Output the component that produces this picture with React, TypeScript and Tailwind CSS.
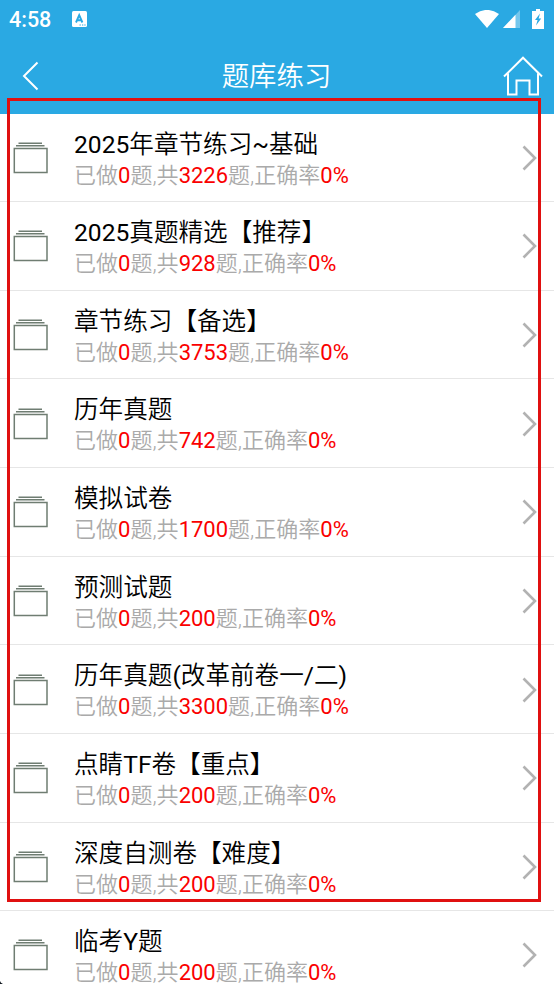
const rows = [
  { title: "2025年章节练习~基础", total: 3226 },
  { title: "2025真题精选【推荐】", total: 928 },
  { title: "章节练习【备选】", total: 3753 },
  { title: "历年真题", total: 742 },
  { title: "模拟试卷", total: 1700 },
  { title: "预测试题", total: 200 },
  { title: "历年真题(改革前卷一/二)", total: 3300 },
  { title: "点睛TF卷【重点】", total: 200 },
  { title: "深度自测卷【难度】", total: 200 },
  { title: "临考Y题", total: 200 },
];

const StatusBar = () => (
  <div className="flex h-[38px] items-center justify-between pl-[9px] pr-[10px]">
    <div className="flex items-center gap-[21px]">
      <span className="pt-px text-[21.5px] font-medium leading-[38px]">4:58</span>
      <svg width="15" height="16" viewBox="0 0 15 16">
        <rect width="15" height="16" rx="1.5" fill="#fff" />
        <path d="M4 11.5 7.2 4.2 10.4 11.5M5.2 9.2h4" fill="none" stroke="#2aa9e3" strokeWidth="1.9" />
        <path d="M7.5 14h1.3M10 14h1.3M12.3 14h1.3" stroke="#2aa9e3" strokeWidth="1.2" />
      </svg>
    </div>
    <div className="flex items-center">
      <svg width="24" height="18" viewBox="0 0 24 18">
        <path d="M0 4Q12-4.2 24 4L12 18Z" fill="#fff" />
      </svg>
      <svg className="ml-[4px]" width="17" height="18" viewBox="0 0 17 18">
        <path d="M17 0V18H0Z" fill="#fff" opacity=".35" />
        <path d="M12.5 4.8V18H0Z" fill="#fff" />
      </svg>
      <svg className="ml-[12px]" width="12" height="20" viewBox="0 0 12 20">
        <path d="M4 0h4v2h4v18H0V2h4Z" fill="#fff" />
        <path d="M8 4.5 3 11h2.6L4 16.5 9.2 9.5H6.6Z" fill="#2aa9e3" />
      </svg>
    </div>
  </div>
);

const Header = () => (
  <header className="h-[113.5px] shrink-0 bg-[#2aa9e3] text-white">
    <StatusBar />
    <div className="flex h-[75px] items-center justify-between pl-[22px] pr-[11px]">
      <svg width="28" height="30" viewBox="0 0 28 30" fill="none" stroke="#fff" strokeWidth="2">
        <path d="M15.5 1.5 2 15 15.5 28.5" />
      </svg>
      <h1 className="pt-[4px] text-[27.4px] font-[350] leading-none">题库练习</h1>
      <svg width="40" height="40" viewBox="0 0 40 40" fill="none" stroke="#fff" strokeWidth="2">
        <path d="M1 20.5 20 1.7 39 20.5M5 17.5V38.5H13.5V24.5H26.5V38.5H35V17.5" />
      </svg>
    </div>
  </header>
);

const FolderIcon = () => (
  <svg width="35" height="32" viewBox="0 0 35 32" fill="none" stroke="#6f7d72" strokeWidth="1.5">
    <path d="M5.5 1.2h23.5M3 3.8h28.5" />
    <path d="M1.3 6.5h32.7v24H1.3Z" />
  </svg>
);

// Latin runs need the regular weight next to the lighter Chinese glyphs
const RowTitle = ({ text }: { text: string }) => (
  <div className="text-[24.6px] font-[350] leading-[33px] text-black">
    {text.split(/([\x20-\x7e]+)/).map((part, i) =>
      i % 2 ? (
        <span key={i} className="font-normal">
          {part}
        </span>
      ) : (
        part
      )
    )}
  </div>
);

const App = () => {
  return (
    <div
      lang="zh-CN"
      className="relative flex h-[984px] w-[554px] flex-col overflow-hidden bg-white font-[Roboto,'Noto_Sans_CJK_SC',sans-serif]"
    >
      <Header />
      <ul>
        {rows.map((row) => (
          <li
            key={row.title}
            className="flex h-[88.625px] items-center border-b-[1.5px] border-[#e6e6e6] pl-[13px] pr-[17px] pt-px"
          >
            <FolderIcon />
            <div className="ml-[26px] flex-1 whitespace-nowrap pt-[1.5px]">
              <RowTitle text={row.title} />
              <div className="text-[22px] font-[350] leading-[29px] text-[#aaa]">
                已做<span className="font-normal text-[#fa0000]">0</span>题,共
                <span className="font-normal text-[#fa0000]">{row.total}</span>题,正确率
                <span className="font-normal text-[#fa0000]">0%</span>
              </div>
            </div>
            <svg width="15" height="26" viewBox="0 0 15 26" fill="none" stroke="#b2b2b2" strokeWidth="2.6">
              <path d="M1.5 1.5 13 13 1.5 24.5" />
            </svg>
          </li>
        ))}
      </ul>

      {/* Highlight frame over the list */}
      <div className="pointer-events-none absolute left-[7px] top-[98px] h-[804px] w-[534px] border-[3px] border-[#e01010]" />
      {/* Rounded screen corner */}
      <svg className="absolute bottom-0 left-0" width="3" height="3" viewBox="0 0 3 3">
        <path d="M0 0Q.5 2.2 3 3H0Z" fill="#111820" />
      </svg>
    </div>
  );
};

export default App;
